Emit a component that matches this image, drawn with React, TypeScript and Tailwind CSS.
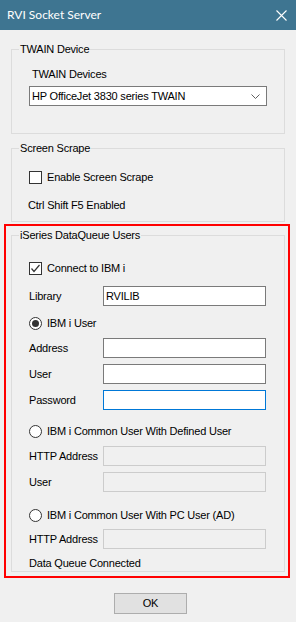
import React from "react";

const font = { fontFamily: '"Liberation Sans", Arial, sans-serif' };

function GroupBox({
  title,
  className,
  children,
}: {
  title: string;
  className?: string;
  children?: React.ReactNode;
}) {
  return (
    <div className={`relative w-[274px] border border-[#dcdcdc] ${className ?? ""}`}>
      <span className="absolute -top-[8px] left-[7px] bg-[#f0f0f0] px-[1px] leading-[14px]">
        {title}
      </span>
      {children}
    </div>
  );
}

function CheckBox({ label, checked }: { label: string; checked?: boolean }) {
  return (
    <div className="flex h-[13px] items-center">
      <div className="flex size-[13px] items-center justify-center border border-[#333333] bg-white">
        {checked && (
          <svg width="11" height="11" viewBox="0 0 11 11">
            <polyline points="1.5,5.5 4,8.5 9.5,2" fill="none" stroke="#333333" strokeWidth="1.2" />
          </svg>
        )}
      </div>
      <span className="ml-[5px] leading-[13px]">{label}</span>
    </div>
  );
}

function Radio({ label, selected }: { label: string; selected?: boolean }) {
  return (
    <div className="flex h-[13px] items-center">
      <div className="flex size-[13px] items-center justify-center rounded-full border border-[#333333] bg-white">
        {selected && <div className="size-[7px] rounded-full bg-[#333333]" />}
      </div>
      <span className="ml-[5px] leading-[13px]">{label}</span>
    </div>
  );
}

function Field({
  label,
  value,
  disabled,
  focused,
  className,
}: {
  label: string;
  value?: string;
  disabled?: boolean;
  focused?: boolean;
  className?: string;
}) {
  const box = disabled
    ? "border-[#cccccc] bg-[#f0f0f0]"
    : focused
      ? "border-[#0078d7] bg-white"
      : "border-[#7a7a7a] bg-white";
  return (
    <div className={`flex h-[20px] items-center ${className ?? ""}`}>
      <span className="w-[74px] leading-[13px]">{label}</span>
      <div className={`flex h-[20px] w-[163px] items-center border px-[2px] ${box}`}>{value}</div>
    </div>
  );
}

export default function App() {
  return (
    <div
      className="flex h-[622px] w-[296px] flex-col bg-[#f0f0f0] text-[11px] tracking-[-0.2px] text-black"
      style={font}
    >
      {/* Title bar */}
      <div className="flex h-[30px] shrink-0 items-center justify-between bg-[#3e7591] pl-[7px] pr-[9px] tracking-normal text-white">
        <span className="text-[12px]" style={{ fontFamily: 'Lato, "Noto Sans", sans-serif' }}>
          RVI Socket Server
        </span>
        <svg width="11" height="11" viewBox="0 0 11 11">
          <path d="M0.5 0.5 L10.5 10.5 M10.5 0.5 L0.5 10.5" stroke="white" strokeWidth="1.1" />
        </svg>
      </div>

      <div className="flex flex-col pl-[11px]">
        {/* TWAIN Device */}
        <GroupBox title="TWAIN Device" className="mt-[19px] h-[85px]">
          <div className="flex flex-col pl-[17px] pt-[18px]">
            <span className="ml-[3px] leading-[13px]">TWAIN Devices</span>
            <div className="mt-[5px] flex h-[20px] w-[238px] items-center justify-between border border-[#7a7a7a] bg-white pl-[2px] pr-[6px]">
              <span>HP OfficeJet 3830 series TWAIN</span>
              <svg width="9" height="5" viewBox="0 0 9 5">
                <polyline points="0.5,0.5 4.5,4.5 8.5,0.5" fill="none" stroke="#606060" strokeWidth="1" />
              </svg>
            </div>
          </div>
        </GroupBox>

        {/* Screen Scrape */}
        <GroupBox title="Screen Scrape" className="mt-[14px] h-[74px]">
          <div className="flex flex-col pl-[17px] pt-[22px]">
            <CheckBox label="Enable Screen Scrape" />
            <span className="-ml-[1px] mt-[15px] leading-[13px]">Ctrl Shift F5 Enabled</span>
          </div>
        </GroupBox>
      </div>

      {/* highlighted group */}
      <div className="ml-[4px] mt-[2px] h-[354px] w-[286px] border-2 border-[#ff0000] pl-[5px] pt-[9px]">
        <GroupBox title="iSeries DataQueue Users" className="h-[337px]">
          <div className="flex flex-col pl-[17px] pt-[26px]">
            <CheckBox label="Connect to IBM i" checked />
            <Field label="Library" value="RVILIB" className="mt-[11px]" />
            <div className="mt-[11px]">
              <Radio label="IBM i User" selected />
            </div>
            <Field label="Address" className="mt-[8px]" />
            <Field label="User" className="mt-[6px]" />
            <Field label="Password" focused className="mt-[6px]" />
            <div className="mt-[15px]">
              <Radio label="IBM i Common User With Defined User" />
            </div>
            <Field label="HTTP Address" disabled className="mt-[8px]" />
            <Field label="User" disabled className="mt-[6px]" />
            <div className="mt-[17px]">
              <Radio label="IBM i Common User With PC User (AD)" />
            </div>
            <Field label="HTTP Address" disabled className="mt-[7px]" />
            <span className="mt-[8px] leading-[13px]">Data Queue Connected</span>
          </div>
        </GroupBox>
      </div>

      {/* OK */}
      <div className="ml-[114px] mt-[15px] flex h-[21px] w-[73px] items-center justify-center border border-[#adadad] bg-[#e1e1e1]">
        OK
      </div>
    </div>
  );
}
